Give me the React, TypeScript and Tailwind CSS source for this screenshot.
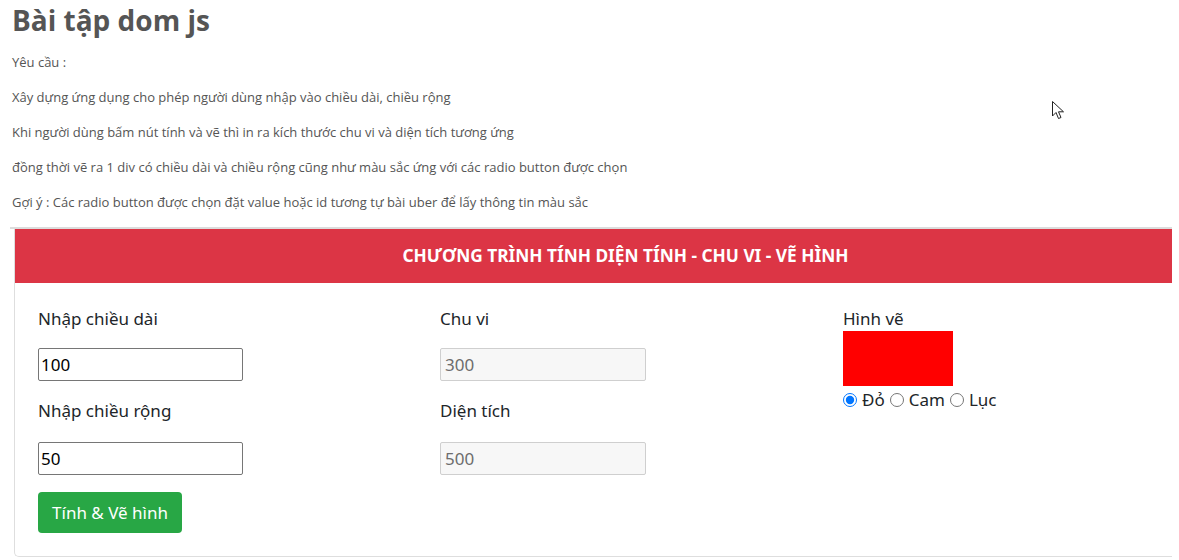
import React, { useState } from "react";

const colors: Record<string, string> = {
  red: "#ff0000",
  orange: "orange",
  green: "green",
};

export default function App() {
  const [length, setLength] = useState("100");
  const [width, setWidth] = useState("50");
  const [color, setColor] = useState("red");
  const [result, setResult] = useState({ perimeter: "300", area: "500", w: 110, h: 55, color: "red" });

  const handleCalc = () => {
    const l = Number(length);
    const w = Number(width);
    setResult({
      perimeter: String((l + w) * 2),
      area: String(l * w),
      w: l * 1.1,
      h: w * 1.1,
      color,
    });
  };

  return (
    <div className="relative w-[1179px] h-[560px] overflow-hidden bg-white font-['Open_Sans',sans-serif] text-[#555]">
      {/* Intro */}
      <div className="pl-3">
        <h1 className="text-[28px] font-bold leading-[38px] pt-px">Bài tập dom js</h1>
        <div className="text-[13px] leading-[22px] mt-[12px] flex flex-col gap-[13px]">
          <p>Yêu cầu :</p>
          <p>Xây dựng ứng dụng cho phép người dùng nhập vào chiều dài, chiều rộng</p>
          <p>Khi người dùng bấm nút tính và vẽ thì in ra kích thước chu vi và diện tích tương ứng</p>
          <p>đồng thời vẽ ra 1 div có chiều dài và chiều rộng cũng như màu sắc ứng với các radio button được chọn</p>
          <p>Gợi ý : Các radio button được chọn đặt value hoặc id tương tự bài uber để lấy thông tin màu sắc</p>
        </div>
      </div>

      {/* Card */}
      <div className="ml-[10px] mt-[14px] w-[1162px] border-t-2 border-[#dcdcdc]">
        <div className="ml-[4px] h-[328px] border-l border-b border-[#dedede] rounded-bl-[5px] font-['Noto_Sans',sans-serif] text-[#212529]">
          <div className="h-[54px] bg-[#dc3545] flex items-center justify-center pl-[64px] text-white text-[17.3px] font-bold">
            CHƯƠNG TRÌNH TÍNH DIỆN TÍNH - CHU VI - VẼ HÌNH
          </div>
          <div className="grid grid-cols-[402px_403px_1fr] pl-[23px] pt-[23px] text-[17px]">
            {/* Column 1 */}
            <div className="flex flex-col">
              <label className="leading-[26px]">Nhập chiều dài</label>
              <input
                value={length}
                onChange={(e) => setLength(e.target.value)}
                className="mt-[16px] w-[205px] h-[33px] border border-[#767676] rounded-[2px] px-[2px] text-[17px] text-black outline-none"
              />
              <label className="leading-[26px] mt-[17px]">Nhập chiều rộng</label>
              <input
                value={width}
                onChange={(e) => setWidth(e.target.value)}
                className="mt-[18px] w-[205px] h-[33px] border border-[#767676] rounded-[2px] px-[2px] text-[17px] text-black outline-none"
              />
              <button
                onClick={handleCalc}
                className="mt-[17px] w-[144px] h-[41px] bg-[#28a745] text-white rounded-[4px] text-[17px]"
              >
                Tính &amp; Vẽ hình
              </button>
            </div>

            {/* Column 2 */}
            <div className="flex flex-col">
              <label className="leading-[26px]">Chu vi</label>
              <input
                value={result.perimeter}
                disabled
                className="mt-[16px] w-[206px] h-[33px] border border-[#cfcfcf] rounded-[2px] bg-[#f7f7f7] px-[4px] text-[17px] text-[#6d6d6d]"
              />
              <label className="leading-[26px] mt-[17px]">Diện tích</label>
              <input
                value={result.area}
                disabled
                className="mt-[18px] w-[206px] h-[33px] border border-[#cfcfcf] rounded-[2px] bg-[#f7f7f7] px-[4px] text-[17px] text-[#6d6d6d]"
              />
            </div>

            {/* Column 3 */}
            <div className="flex flex-col">
              <label className="leading-[26px]">Hình vẽ</label>
              <div
                className="-mt-[1px]"
                style={{ width: result.w, height: result.h, background: colors[result.color] }}
              />
              <div className="flex items-center gap-[5px] mt-[3px] leading-[22px]">
                {[
                  ["red", "Đỏ"],
                  ["orange", "Cam"],
                  ["green", "Lục"],
                ].map(([val, text]) => (
                  <label key={val} className="flex items-center gap-[5px]">
                    <input
                      type="radio"
                      name="color"
                      checked={color === val}
                      onChange={() => setColor(val)}
                      className="w-[14px] h-[14px] m-0 accent-[#0075ff]"
                    />
                    <span>{text}</span>
                  </label>
                ))}
              </div>
            </div>
          </div>
        </div>
      </div>

      {/* mouse pointer in the screenshot */}
      <svg className="absolute left-[1052px] top-[101px]" width="13" height="20" viewBox="0 0 13 20">
        <path d="M0.5 0.5 L0.5 15 L4 11.5 L6.5 17.5 L9 16.5 L6.5 10.8 L11.5 10.8 Z" fill="white" stroke="#222" strokeWidth="1" />
      </svg>
    </div>
  );
}
